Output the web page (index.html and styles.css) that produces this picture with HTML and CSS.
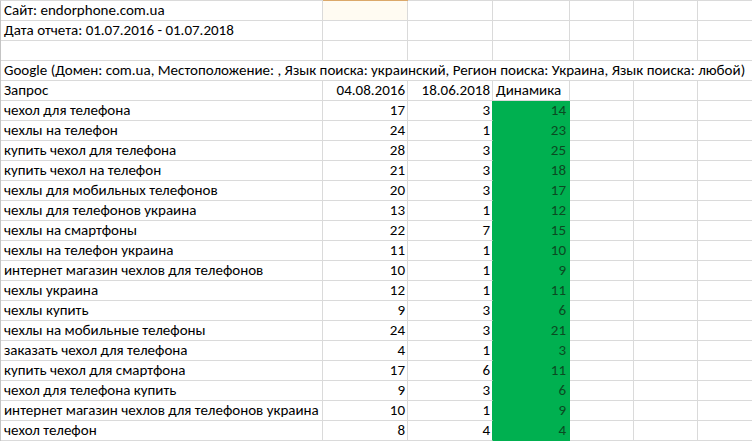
FILE: index.html
```html
<!DOCTYPE html>
<html lang="ru">
<head>
<meta charset="utf-8">
<title>endorphone.com.ua</title>
<link rel="stylesheet" href="styles.css">
</head>
<body>
<div class="sheet">
  <div class="c">Сайт: endorphone.com.ua</div><div class="c sel"></div><div class="c"></div><div class="c"></div><div class="c"></div><div class="c"></div><div class="c last"></div>
  <div class="c">Дата отчета: 01.07.2016 - 01.07.2018</div><div class="c"></div><div class="c"></div><div class="c"></div><div class="c"></div><div class="c"></div><div class="c last"></div>
  <div class="c"></div><div class="c"></div><div class="c"></div><div class="c"></div><div class="c"></div><div class="c"></div><div class="c last"></div>
  <div class="c span">Google (Домен: com.ua, Местоположение: , Язык поиска: украинский, Регион поиска: Украина, Язык поиска: любой)</div>
  <div class="c">Запрос</div><div class="c n">04.08.2016</div><div class="c n">18.06.2018</div><div class="c">Динамика</div><div class="c"></div><div class="c"></div><div class="c last"></div>

  <div class="c">чехол для телефона</div><div class="c n">17</div><div class="c n gl">3</div><div class="c n g">14</div><div class="c"></div><div class="c"></div><div class="c last"></div>
  <div class="c">чехлы на телефон</div><div class="c n">24</div><div class="c n gl">1</div><div class="c n g">23</div><div class="c"></div><div class="c"></div><div class="c last"></div>
  <div class="c">купить чехол для телефона</div><div class="c n">28</div><div class="c n gl">3</div><div class="c n g">25</div><div class="c"></div><div class="c"></div><div class="c last"></div>
  <div class="c">купить чехол на телефон</div><div class="c n">21</div><div class="c n gl">3</div><div class="c n g">18</div><div class="c"></div><div class="c"></div><div class="c last"></div>
  <div class="c">чехлы для мобильных телефонов</div><div class="c n">20</div><div class="c n gl">3</div><div class="c n g">17</div><div class="c"></div><div class="c"></div><div class="c last"></div>
  <div class="c">чехлы для телефонов украина</div><div class="c n">13</div><div class="c n gl">1</div><div class="c n g">12</div><div class="c"></div><div class="c"></div><div class="c last"></div>
  <div class="c">чехлы на смартфоны</div><div class="c n">22</div><div class="c n gl">7</div><div class="c n g">15</div><div class="c"></div><div class="c"></div><div class="c last"></div>
  <div class="c">чехлы на телефон украина</div><div class="c n">11</div><div class="c n gl">1</div><div class="c n g">10</div><div class="c"></div><div class="c"></div><div class="c last"></div>
  <div class="c">интернет магазин чехлов для телефонов</div><div class="c n">10</div><div class="c n gl">1</div><div class="c n g">9</div><div class="c"></div><div class="c"></div><div class="c last"></div>
  <div class="c">чехлы украина</div><div class="c n">12</div><div class="c n gl">1</div><div class="c n g">11</div><div class="c"></div><div class="c"></div><div class="c last"></div>
  <div class="c">чехлы купить</div><div class="c n">9</div><div class="c n gl">3</div><div class="c n g">6</div><div class="c"></div><div class="c"></div><div class="c last"></div>
  <div class="c">чехлы на мобильные телефоны</div><div class="c n">24</div><div class="c n gl">3</div><div class="c n g">21</div><div class="c"></div><div class="c"></div><div class="c last"></div>
  <div class="c">заказать чехол для телефона</div><div class="c n">4</div><div class="c n gl">1</div><div class="c n g">3</div><div class="c"></div><div class="c"></div><div class="c last"></div>
  <div class="c">купить чехол для смартфона</div><div class="c n">17</div><div class="c n gl">6</div><div class="c n g">11</div><div class="c"></div><div class="c"></div><div class="c last"></div>
  <div class="c">чехол для телефона купить</div><div class="c n">9</div><div class="c n gl">3</div><div class="c n g">6</div><div class="c"></div><div class="c"></div><div class="c last"></div>
  <div class="c">интернет магазин чехлов для телефонов украина</div><div class="c n">10</div><div class="c n gl">1</div><div class="c n g">9</div><div class="c"></div><div class="c"></div><div class="c last"></div>
  <div class="c">чехол телефон</div><div class="c n">8</div><div class="c n gl">4</div><div class="c n g">4</div><div class="c"></div><div class="c"></div><div class="c last"></div>
</div>
</body>
</html>
```
FILE: styles.css
```css
html, body {
  margin: 0;
  padding: 0;
  background: #ffffff;
  overflow: hidden;
}

.sheet {
  width: 752px;
  box-sizing: border-box;
  display: grid;
  grid-template-columns: 322px 85px 85px 77px 64px 64px 1fr;
  grid-auto-rows: 20px;
  border-top: 1px solid #dadada;
  border-left: 1px solid #c4c4c4;
  font-family: Carlito, Lato, "Liberation Sans", sans-serif;
  font-size: 15px;
  color: #000000;
}

.c {
  box-sizing: border-box;
  border-right: 1px solid #dadada;
  border-bottom: 1px solid #dadada;
  padding: 0 3px;
  line-height: 19px;
  white-space: nowrap;
  overflow: visible;
}

.c.last {
  border-right: none;
}

.c.span {
  grid-column: 1 / -1;
  border-right: none;
  padding-left: 3px;
}

.c.n {
  text-align: right;
  padding-right: 2px;
}

.c.sel {
  background: #fffbf2;
  box-shadow: 0 -1px 0 #dba86a;
}

.c.gl {
  border-right-color: #00b050;
}

.c.g {
  background: #00b050;
  border-right-color: #00b050;
  border-bottom-color: #00b050;
  color: #0b4a22;
  padding-right: 3px;
}
```
